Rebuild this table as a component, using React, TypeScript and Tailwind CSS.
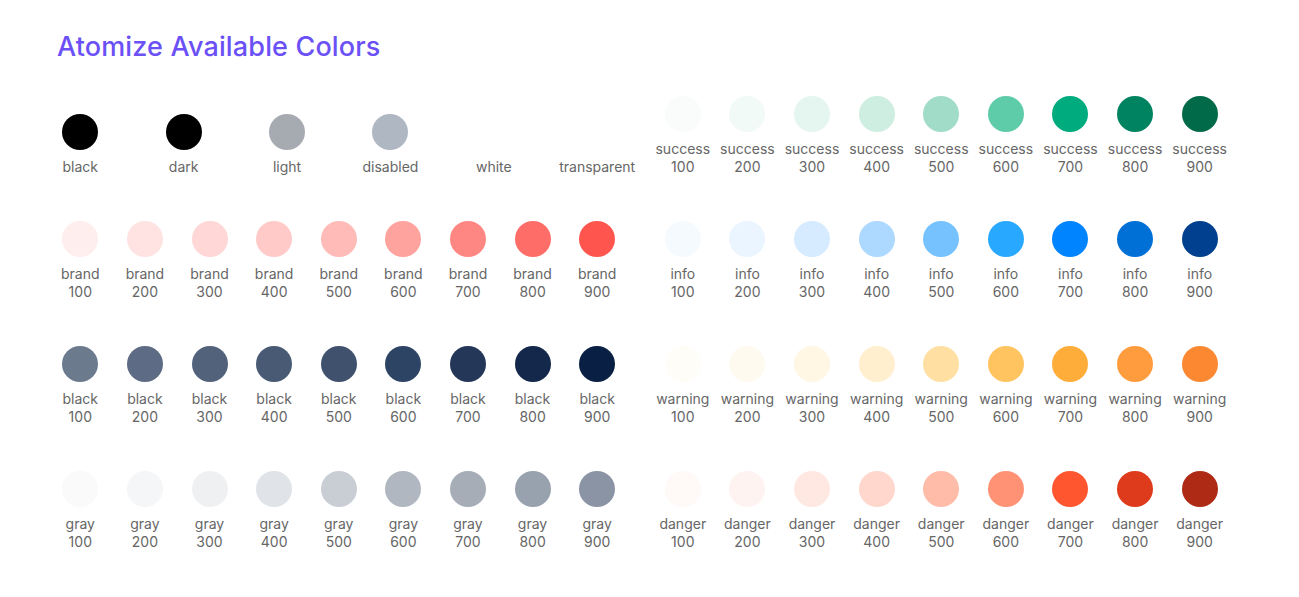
type Swatch = { label: string; sub?: string; color: string };

const basics: Swatch[] = [
  { label: "black", color: "bg-[#000000]" },
  { label: "dark", color: "bg-[#000000]" },
  { label: "light", color: "bg-[#a6abb1]" },
  { label: "disabled", color: "bg-[#afb7c2]" },
  { label: "white", color: "bg-[#ffffff]" },
  { label: "transparent", color: "bg-transparent" },
];

const steps = ["100", "200", "300", "400", "500", "600", "700", "800", "900"];

const scale = (label: string, colors: string[]): Swatch[] =>
  colors.map((color, i) => ({ label, sub: steps[i], color }));

const success = scale("success", [
  "bg-[#f9fcfb]",
  "bg-[#f1faf6]",
  "bg-[#e5f6f0]",
  "bg-[#cdeee0]",
  "bg-[#a0dcc8]",
  "bg-[#5ecba9]",
  "bg-[#00ab7d]",
  "bg-[#008360]",
  "bg-[#006a49]",
]);

const brand = scale("brand", [
  "bg-[#ffeeee]",
  "bg-[#ffe3e3]",
  "bg-[#ffd7d6]",
  "bg-[#ffcac8]",
  "bg-[#ffbbb8]",
  "bg-[#ffa39f]",
  "bg-[#ff8783]",
  "bg-[#ff6d68]",
  "bg-[#ff554f]",
]);

const info = scale("info", [
  "bg-[#f5faff]",
  "bg-[#ebf5ff]",
  "bg-[#d6ebff]",
  "bg-[#add8ff]",
  "bg-[#75c2ff]",
  "bg-[#29a8ff]",
  "bg-[#0084ff]",
  "bg-[#006fd6]",
  "bg-[#00408e]",
]);

const black = scale("black", [
  "bg-[#6c7a8e]",
  "bg-[#5d6c84]",
  "bg-[#53627b]",
  "bg-[#495a75]",
  "bg-[#3f516d]",
  "bg-[#2e4465]",
  "bg-[#243758]",
  "bg-[#13284a]",
  "bg-[#0a1f44]",
]);

const warning = scale("warning", [
  "bg-[#fffdf7]",
  "bg-[#fffaf0]",
  "bg-[#fff6e3]",
  "bg-[#ffefcf]",
  "bg-[#ffdfa2]",
  "bg-[#ffc360]",
  "bg-[#ffad3a]",
  "bg-[#ff9d3e]",
  "bg-[#fc8831]",
]);

const gray = scale("gray", [
  "bg-[#fafafa]",
  "bg-[#f5f6f7]",
  "bg-[#eff0f2]",
  "bg-[#e0e3e8]",
  "bg-[#c9ced5]",
  "bg-[#b0b7c1]",
  "bg-[#a6adb7]",
  "bg-[#98a1ae]",
  "bg-[#8a94a4]",
]);

const danger = scale("danger", [
  "bg-[#fff9f8]",
  "bg-[#fff3f1]",
  "bg-[#ffe7e2]",
  "bg-[#ffd7cc]",
  "bg-[#ffbda9]",
  "bg-[#ff9275]",
  "bg-[#ff5630]",
  "bg-[#de3b1d]",
  "bg-[#ae2a15]",
]);

const ColorItem = ({ swatch }: { swatch: Swatch }) => (
  <div className="w-[64.6px] flex flex-col items-center">
    <div className={`size-9 rounded-full ${swatch.color}`} />
    <div className="mt-[8px] text-[14px] leading-[18px] text-[#666666] text-center whitespace-nowrap">
      <div>{swatch.label}</div>
      {swatch.sub && <div>{swatch.sub}</div>}
    </div>
  </div>
);

const Row = ({ items }: { items: Swatch[] }) => (
  <div className="flex justify-between items-end">
    {items.map((s) => (
      <ColorItem key={s.label + (s.sub ?? "")} swatch={s} />
    ))}
  </div>
);

export default function App() {
  return (
    <div
      className="min-h-screen bg-white pt-[31px] px-[48px]"
      style={{ fontFamily: "Inter, Roboto, 'Liberation Sans', sans-serif" }}
    >
      <h1 className="pl-[9px] text-[27px] leading-[32px] tracking-[0.15px] font-medium text-[#6a50f5]">
        Atomize Available Colors
      </h1>
      <div className="mt-[33px] w-[1184px] grid grid-cols-2 gap-x-[21px] gap-y-[45px]">
        <Row items={basics} />
        <Row items={success} />
        <Row items={brand} />
        <Row items={info} />
        <Row items={black} />
        <Row items={warning} />
        <Row items={gray} />
        <Row items={danger} />
      </div>
    </div>
  );
}
